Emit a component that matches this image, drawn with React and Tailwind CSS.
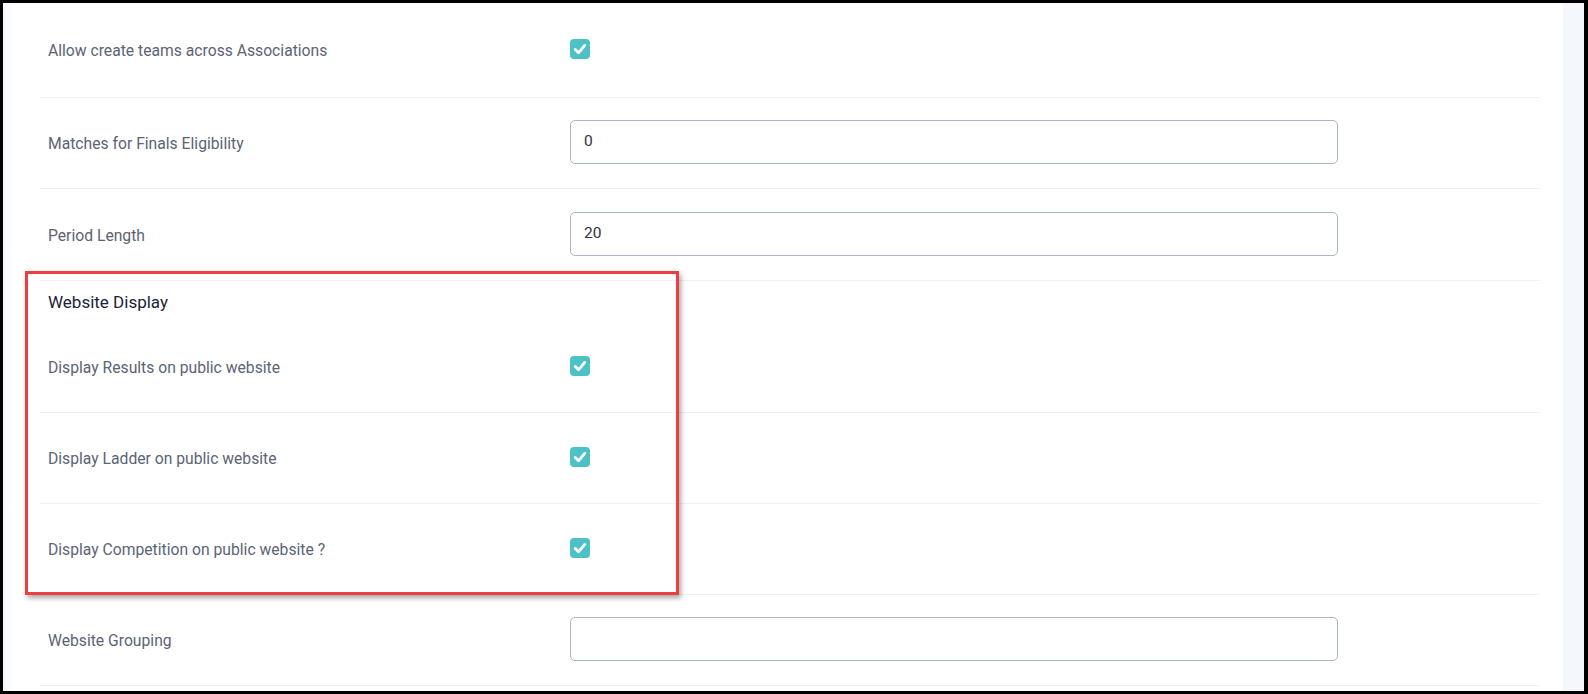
const Check = () => (
  <span className="flex h-5 w-5 items-center justify-center rounded-[4px] bg-[#4cc2c6]">
    <svg viewBox="0 0 16 16" className="h-4 w-4" fill="none">
      <path d="M3.3 8.6 6.5 11.8 12.7 4.4" stroke="#fff" strokeWidth="2.8" strokeLinecap="round" strokeLinejoin="round" />
    </svg>
  </span>
);

const Row = ({ label, children, h = "h-[91px]" }) => (
  <div className={`flex items-center border-b border-[#eef1f5] ${h}`}>
    <div className="w-[530px] pl-2 pt-[2px] text-[15.7px] text-[#5b6474]">{label}</div>
    <div className="flex items-center pb-[2px]">{children}</div>
  </div>
);

const Field = ({ value }) => (
  <div className="flex h-[44px] w-[768px] items-center rounded-[5px] border border-[#aab6c6] px-[13px] text-[15.5px] text-[#2b3240]">
    {value}
  </div>
);

const App = () => {
  return (
    <div className="h-[694px] w-[1588px] overflow-hidden bg-black pt-[3px] pb-[3px] pl-[3px] pr-[4px]" style={{ fontFamily: "Roboto, 'Liberation Sans', sans-serif" }}>
      <div className="flex h-full bg-white">
        <div className="w-[10px] bg-gradient-to-r from-[#f3f6fb] to-white" />
        <div className="w-[27px]" />
        <div className="w-[1500px]">
          <Row label="Allow create teams across Associations" h="h-[95px]">
            <Check />
          </Row>
          <Row label="Matches for Finals Eligibility">
            <Field value="0" />
          </Row>
          <Row label="Period Length" h="h-[92px]">
            <Field value="20" />
          </Row>

          <div className="relative">
            <div className="pt-[11px] pl-2 text-[17px] leading-[21px] text-[#1b2336]">Website Display</div>
            <div className="h-[9px]" />
            <Row label="Display Results on public website">
              <Check />
            </Row>
            <Row label="Display Ladder on public website">
              <Check />
            </Row>
            <Row label="Display Competition on public website ?">
              <Check />
            </Row>
            <div className="pointer-events-none absolute top-[-10px] left-[-15px] bottom-[0px] w-[654px] border-[3px] border-[#ec3d3f] shadow-[2px_3px_5px_rgba(0,0,0,0.35)]" />
          </div>

          <Row label="Website Grouping">
            <Field value="" />
          </Row>
        </div>
        <div className="flex-1" />
        <div className="w-[21px] bg-[#f4f8fc]" />
      </div>
    </div>
  );
};

export default App;
